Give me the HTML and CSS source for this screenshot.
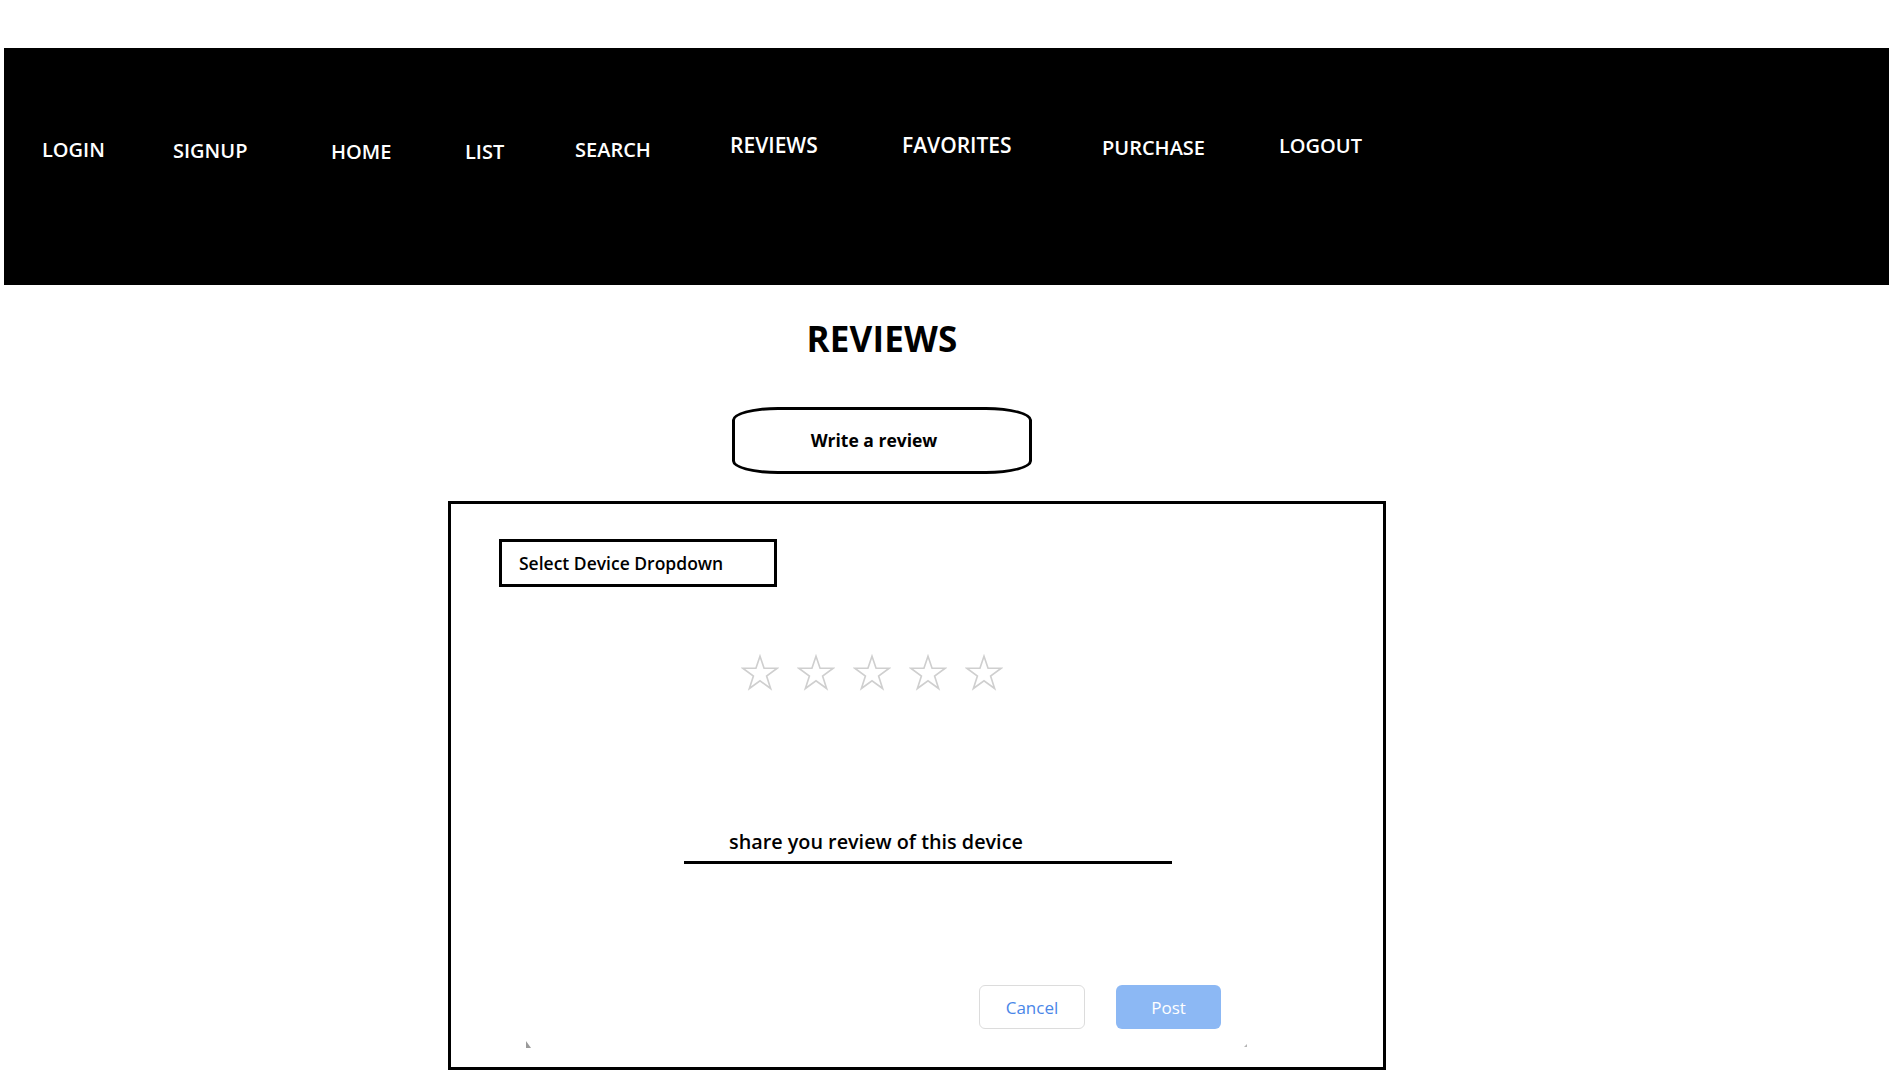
FILE: index.html
```html
<!DOCTYPE html>
<html lang="en">
<head>
<meta charset="utf-8">
<title>Reviews</title>
<link rel="stylesheet" href="styles.css">
</head>
<body>
<header class="navbar">
  <a class="nav-link">LOGIN</a>
  <a class="nav-link nav-down1">SIGNUP</a>
  <a class="nav-link nav-down2">HOME</a>
  <a class="nav-link nav-down2">LIST</a>
  <a class="nav-link">SEARCH</a>
  <a class="nav-link nav-wide nav-up3">REVIEWS</a>
  <a class="nav-link nav-wide nav-up4">FAVORITES</a>
  <a class="nav-link nav-up2">PURCHASE</a>
  <a class="nav-link nav-up4">LOGOUT</a>
</header>

<main class="page">
  <section class="intro">
    <h1 class="page-title">REVIEWS</h1>
    <button class="write-btn">Write a review</button>
  </section>

  <section class="review-card">
    <div class="device-select">Select Device Dropdown</div>

    <div class="stars">
      <svg class="star" viewBox="-1 -1 42 39"><polygon points="20,0.5 24.49,13.82 39.02,13.82 27.27,22.36 31.76,36.18 20,27.64 8.24,36.18 12.73,22.36 0.98,13.82 15.51,13.82"/></svg>
      <svg class="star" viewBox="-1 -1 42 39"><polygon points="20,0.5 24.49,13.82 39.02,13.82 27.27,22.36 31.76,36.18 20,27.64 8.24,36.18 12.73,22.36 0.98,13.82 15.51,13.82"/></svg>
      <svg class="star" viewBox="-1 -1 42 39"><polygon points="20,0.5 24.49,13.82 39.02,13.82 27.27,22.36 31.76,36.18 20,27.64 8.24,36.18 12.73,22.36 0.98,13.82 15.51,13.82"/></svg>
      <svg class="star" viewBox="-1 -1 42 39"><polygon points="20,0.5 24.49,13.82 39.02,13.82 27.27,22.36 31.76,36.18 20,27.64 8.24,36.18 12.73,22.36 0.98,13.82 15.51,13.82"/></svg>
      <svg class="star" viewBox="-1 -1 42 39"><polygon points="20,0.5 24.49,13.82 39.02,13.82 27.27,22.36 31.76,36.18 20,27.64 8.24,36.18 12.73,22.36 0.98,13.82 15.51,13.82"/></svg>
    </div>

    <div class="review-field">share you review of this device</div>

    <div class="actions">
      <button class="btn btn-cancel">Cancel</button>
      <button class="btn btn-post">Post</button>
    </div>

    <div class="corner-row">
      <span class="corner corner-left"></span>
      <span class="corner corner-right"></span>
    </div>
  </section>
</main>
</body>
</html>
```

FILE: styles.css
```css
* {
  box-sizing: border-box;
}

body {
  margin: 0;
  background: #ffffff;
  font-family: "Open Sans", "Liberation Sans", sans-serif;
  color: #000000;
}

/* ---------- Navbar ---------- */
.navbar {
  margin: 48px 15px 0 4px;
  height: 237px;
  background: #000000;
  display: grid;
  grid-template-columns: 131px 158px 134px 110px 155px 172px 200px 177px auto;
  align-items: start;
  padding: 88px 0 0 38px;
}

.nav-link {
  color: #ffffff;
  font-size: 20px;
  font-weight: 600;
  line-height: 27px;
  white-space: nowrap;
}

.nav-wide {
  font-size: 21px;
}

.nav-down1 { margin-top: 1px; }
.nav-down2 { margin-top: 2px; }
.nav-up2 { margin-top: -2px; }
.nav-up3 { margin-top: -4px; }
.nav-up4 { margin-top: -4px; }

/* ---------- Page ---------- */
.page {
  padding-left: 448px;
}

.intro {
  width: 868px;
  display: flex;
  flex-direction: column;
  align-items: center;
}

.page-title {
  margin: 30px 0 0;
  font-size: 35px;
  font-weight: 700;
  line-height: 48px;
  letter-spacing: 0.2px;
}

.write-btn {
  margin-top: 44px;
  width: 300px;
  height: 67px;
  border: 3px solid #000000;
  border-radius: 46px / 13px;
  background: #ffffff;
  font-family: "Open Sans", "Liberation Sans", sans-serif;
  font-size: 17.5px;
  font-weight: 700;
  color: #000000;
  padding: 0 16px 2px 0;
}

/* ---------- Card ---------- */
.review-card {
  margin-top: 27px;
  width: 938px;
  height: 569px;
  border: 3px solid #000000;
  display: flex;
  flex-direction: column;
  align-items: flex-start;
}

.device-select {
  margin: 35px 0 0 48px;
  width: 278px;
  height: 48px;
  border: 3px solid #000000;
  display: flex;
  align-items: center;
  padding: 0 0 0 17px;
  font-size: 17.5px;
  font-weight: 600;
}

.stars {
  margin: 67px 0 0 290px;
  display: flex;
  gap: 18px;
}

.star {
  width: 38px;
  height: 37px;
  display: block;
}

.star polygon {
  fill: none;
  stroke: #cfcfcf;
  stroke-width: 1.8;
  stroke-linejoin: miter;
}

.review-field {
  margin: 137px 0 0 233px;
  width: 488px;
  padding: 0 0 6px 45px;
  border-bottom: 3px solid #000000;
  font-size: 19.8px;
  font-weight: 600;
  line-height: 27px;
}

.actions {
  margin: 121px 0 0 528px;
  display: flex;
  gap: 31px;
}

.btn {
  height: 44px;
  border-radius: 6px;
  font-family: "Open Sans", "Liberation Sans", sans-serif;
  font-size: 17px;
  font-weight: 400;
  padding: 0;
}

.btn-cancel {
  width: 106px;
  background: #ffffff;
  border: 1px solid #dcdcdc;
  color: #4a86e8;
}

.btn-post {
  width: 105px;
  background: #8cb8f4;
  border: none;
  color: #ffffff;
}

.corner-row {
  margin-top: 11px;
  width: 100%;
  display: flex;
  align-items: flex-end;
  padding: 0 136px 0 75px;
  height: 8px;
}

.corner {
  display: block;
  width: 0;
  height: 0;
}

.corner-left {
  border-left: 5px solid #9a9a9a;
  border-top: 7px solid transparent;
}

.corner-right {
  margin-left: auto;
  border-right: 3px solid #b5b5b5;
  border-top: 3px solid transparent;
  margin-bottom: 1px;
}
```
